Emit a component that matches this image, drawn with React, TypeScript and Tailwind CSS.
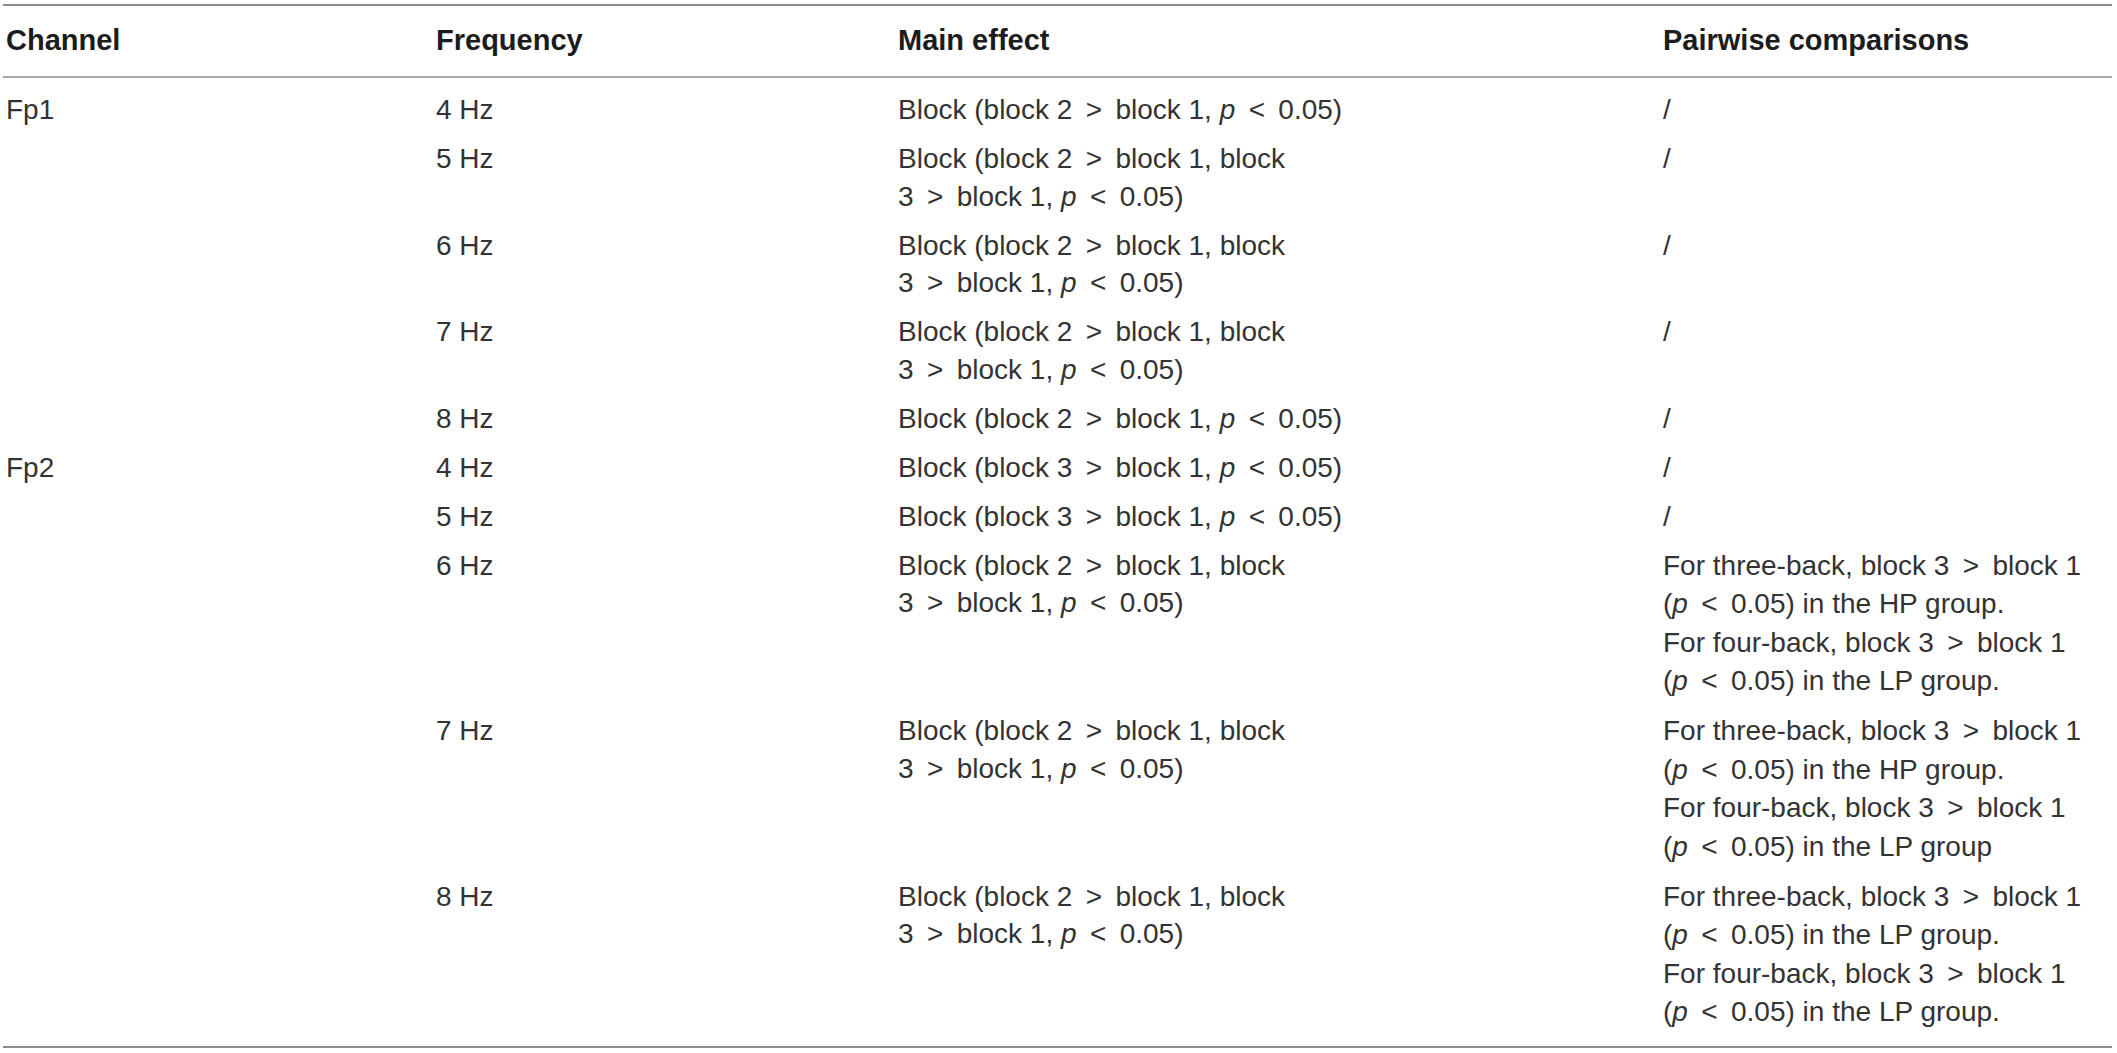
import React from "react";

const Op = ({ c }: { c: string }) => <span className="mx-[0.2em]">{c}</span>;
const P = () => <i>p</i>;

type Row = { ch?: string; f: string; main: React.ReactNode[]; pw: React.ReactNode[] };

const mainOne = (b: string) => [
  <>Block (block {b} <Op c=">" /> block 1, <P /> <Op c="<" /> 0.05)</>,
];
const mainTwo = () => [
  <>Block (block 2 <Op c=">" /> block 1, block</>,
  <>3 <Op c=">" /> block 1, <P /> <Op c="<" /> 0.05)</>,
];
const pw = (a: string, b: string, bEnd: string) => [
  <>For three-back, block 3 <Op c=">" /> block 1</>,
  <>(<P /> <Op c="<" /> 0.05) in the {a} group.</>,
  <>For four-back, block 3 <Op c=">" /> block 1</>,
  <>(<P /> <Op c="<" /> 0.05) in the {b} group{bEnd}</>,
];

const rows: Row[] = [
  { ch: "Fp1", f: "4 Hz", main: mainOne("2"), pw: ["/"] },
  { f: "5 Hz", main: mainTwo(), pw: ["/"] },
  { f: "6 Hz", main: mainTwo(), pw: ["/"] },
  { f: "7 Hz", main: mainTwo(), pw: ["/"] },
  { f: "8 Hz", main: mainOne("2"), pw: ["/"] },
  { ch: "Fp2", f: "4 Hz", main: mainOne("3"), pw: ["/"] },
  { f: "5 Hz", main: mainOne("3"), pw: ["/"] },
  { f: "6 Hz", main: mainTwo(), pw: pw("HP", "LP", ".") },
  { f: "7 Hz", main: mainTwo(), pw: pw("HP", "LP", "") },
  { f: "8 Hz", main: mainTwo(), pw: pw("LP", "LP", ".") },
];

const grid = "grid grid-cols-[430px_462px_765px_1fr]";

export default function App() {
  return (
    <div
      className="w-[2117px] h-[1053px] bg-white pt-[4px]"
      style={{ fontFamily: '"Liberation Sans", Arial, sans-serif' }}
    >
      <div className="ml-[3px] w-[2109px] border-t-2 border-b-2 border-[#8e8e8e]">
        <div className={`${grid} border-b-2 border-[#a9a9a9] py-[16px] text-[29px] leading-[37.5px] font-bold text-[#1c1c1c]`}>
          <div className="pl-[3px]">Channel</div>
          <div className="pl-[3px]">Frequency</div>
          <div className="pl-[3px]">Main effect</div>
          <div className="pl-[3px]">Pairwise comparisons</div>
        </div>
        <div className="pt-[8px] pb-[8px] text-[28px] leading-[37.5px] text-[#333333]">
          {rows.map((r, i) => (
            <div key={i} className={`${grid} py-[5.75px]`}>
              <div className="pl-[3px]">{r.ch ?? ""}</div>
              <div className="pl-[3px]">{r.f}</div>
              <div className="pl-[3px]">
                {r.main.map((m, j) => (
                  <div key={j} className="whitespace-nowrap">{m}</div>
                ))}
              </div>
              <div className={`pl-[3px] ${r.pw.length > 1 ? "leading-[38.5px]" : ""}`}>
                {r.pw.map((m, j) => (
                  <div key={j} className="whitespace-nowrap">{m}</div>
                ))}
              </div>
            </div>
          ))}
        </div>
      </div>
    </div>
  );
}
